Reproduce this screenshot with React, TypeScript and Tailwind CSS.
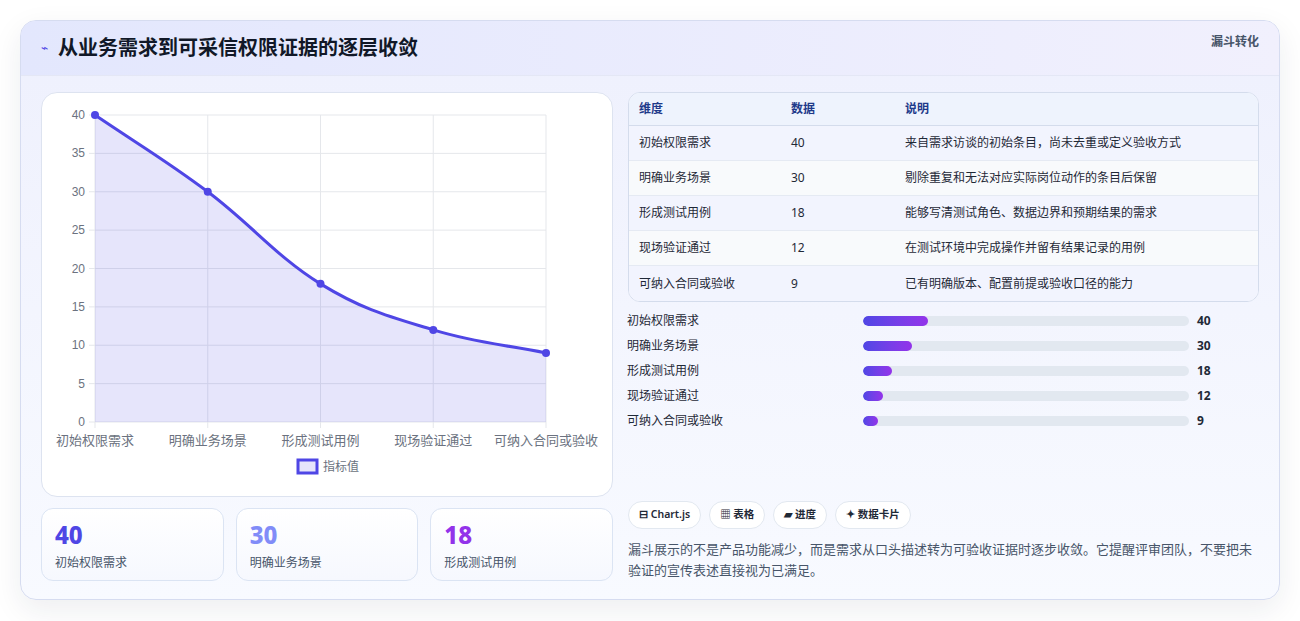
const rows = [
  { name: "初始权限需求", value: 40, note: "来自需求访谈的初始条目，尚未去重或定义验收方式" },
  { name: "明确业务场景", value: 30, note: "剔除重复和无法对应实际岗位动作的条目后保留" },
  { name: "形成测试用例", value: 18, note: "能够写清测试角色、数据边界和预期结果的需求" },
  { name: "现场验证通过", value: 12, note: "在测试环境中完成操作并留有结果记录的用例" },
  { name: "可纳入合同或验收", value: 9, note: "已有明确版本、配置前提或验收口径的能力" },
];

const stats = [
  { value: 40, label: "初始权限需求", color: "text-[#4f46e5]" },
  { value: 30, label: "明确业务场景", color: "text-[#818cf8]" },
  { value: 18, label: "形成测试用例", color: "text-[#9333ea]" },
];

const font = { fontFamily: '"Noto Sans", "Noto Sans CJK SC", sans-serif' };

function Chart() {
  const x0 = 53, x1 = 504, y0 = 22, y1 = 329;
  const xs = rows.map((_, i) => x0 + ((x1 - x0) * i) / 4);
  const ys = rows.map((r) => y1 - ((y1 - y0) * r.value) / 40);
  let d = `M${xs[0]},${ys[0]}`;
  for (let i = 1; i < xs.length; i++) {
    const cx = (xs[i] - xs[i - 1]) / 2.6;
    const prevSlope = i > 1 ? (ys[i] - ys[i - 2]) / (xs[i] - xs[i - 2]) : (ys[1] - ys[0]) / (xs[1] - xs[0]);
    const nextSlope = i < xs.length - 1 ? (ys[i + 1] - ys[i - 1]) / (xs[i + 1] - xs[i - 1]) : (ys[i] - ys[i - 1]) / (xs[i] - xs[i - 1]);
    d += ` C${xs[i - 1] + cx},${ys[i - 1] + prevSlope * cx} ${xs[i] - cx},${ys[i] - nextSlope * cx} ${xs[i]},${ys[i]}`;
  }
  const area = `${d} L${x1},${y1} L${x0},${y1} Z`;
  return (
    <svg width="572" height="403" className="block">
      {[0, 5, 10, 15, 20, 25, 30, 35, 40].map((v) => {
        const y = y1 - ((y1 - y0) * v) / 40;
        return (
          <g key={v}>
            <line x1={x0 - 6} x2={x1} y1={y} y2={y} stroke="#e5e7eb" />
            <text x={x0 - 10} y={y + 4} textAnchor="end" fontSize="12" fill="#6b7280" fontFamily="Liberation Sans, sans-serif">{v}</text>
          </g>
        );
      })}
      {xs.map((x, i) => (
        <g key={i}>
          <line x1={x} x2={x} y1={y0} y2={y1 + 6} stroke="#e5e7eb" />
          <text x={x} y={352} textAnchor="middle" fontSize="13" fill="#6b7280" style={font}>{rows[i].name}</text>
        </g>
      ))}
      <path d={area} fill="rgba(79,70,229,0.14)" />
      <path d={d} fill="none" stroke="#4f46e5" strokeWidth="3" />
      {xs.map((x, i) => (
        <circle key={i} cx={x} cy={ys[i]} r="4" fill="#4f46e5" />
      ))}
      <rect x="256" y="367" width="19" height="13" fill="rgba(79,70,229,0.14)" stroke="#4f46e5" strokeWidth="3" />
      <text x="281" y="378" fontSize="12" fill="#6b7280" style={font}>指标值</text>
    </svg>
  );
}

export default function App() {
  return (
    <div className="min-h-[621px] bg-white pt-5 px-5" style={font}>
      <div className="rounded-2xl border border-[#d6dcf0] bg-gradient-to-b from-[#eef0fd] to-[#f8faff] shadow-[0_10px_30px_rgba(30,41,59,0.08)] overflow-hidden">
        <div className="h-[55px] flex items-center justify-between px-5 bg-gradient-to-r from-[#e3e7fd] to-[#f1f0fd] border-b border-[#e4e7f5]">
          <div className="flex items-center gap-2.5">
            <span className="text-[#4f46e5] text-xs">⌁</span>
            <h1 className="text-xl font-bold text-[#111827]">从业务需求到可采信权限证据的逐层收敛</h1>
          </div>
          <span className="text-xs font-semibold text-[#475569] -mt-3">漏斗转化</span>
        </div>
        <div className="flex gap-[15px] px-5 pt-[16px] pb-[18px]">
          <div className="w-[572px] flex flex-col gap-[11px]">
            <div className="rounded-2xl border border-[#dde3f0] bg-white overflow-hidden">
              <Chart />
            </div>
            <div className="grid grid-cols-3 gap-3">
              {stats.map((s) => (
                <div key={s.label} className="h-[73px] rounded-xl border border-[#dbe4f3] bg-gradient-to-b from-white to-[#f6f8fe] px-[13px] pt-3">
                  <div className={`text-2xl font-extrabold leading-7 ${s.color}`}>{s.value}</div>
                  <div className="text-xs text-[#475569] mt-1.5">{s.label}</div>
                </div>
              ))}
            </div>
          </div>
          <div className="flex-1 flex flex-col">
            <div className="rounded-xl border border-[#d4dcec] bg-white overflow-hidden">
              <div className="flex h-[33px] items-center px-2.5 bg-[#eef3fd] border-b border-[#d4dcec] text-xs font-semibold text-[#1e3a8a]">
                <span className="w-[152px]">维度</span>
                <span className="w-[114px]">数据</span>
                <span>说明</span>
              </div>
              {rows.map((r, i) => (
                <div key={r.name} className={`flex h-[35px] items-center px-2.5 text-xs text-[#1f2937] ${i < 4 ? "border-b border-[#e5eaf3]" : ""} ${i % 2 ? "bg-[#f8fafc]" : "bg-[#f2f4fe]"}`}>
                  <span className="w-[152px]">{r.name}</span>
                  <span className="w-[114px]">{r.value}</span>
                  <span>{r.note}</span>
                </div>
              ))}
            </div>
            <div className="mt-[11px] flex flex-col gap-[9px] -ml-[1px]">
              {rows.map((r) => (
                <div key={r.name} className="flex items-center h-4 text-xs text-[#1f2937]">
                  <span className="w-[236px]">{r.name}</span>
                  <div className="w-[326px] h-[10px] rounded-full bg-[#e2e8f0] overflow-hidden">
                    <div className="h-full rounded-full bg-gradient-to-r from-[#4f46e5] to-[#9333ea]" style={{ width: `${(r.value / 200) * 100}%` }} />
                  </div>
                  <span className="ml-2 font-bold">{r.value}</span>
                </div>
              ))}
            </div>
            <div className="mt-auto flex gap-2 text-[10.5px] font-semibold text-[#1f2937]">
              {["⊟ Chart.js", "▦ 表格", "▰ 进度", "✦ 数据卡片"].map((c) => (
                <span key={c} className="h-7 px-2.5 flex items-center rounded-full border border-[#e2e8f0] bg-white">{c}</span>
              ))}
            </div>
            <p className="mt-2.5 text-[13px] leading-[21px] text-[#475569]">
              漏斗展示的不是产品功能减少，而是需求从口头描述转为可验收证据时逐步收敛。它提醒评审团队，不要把未验证的宣传表述直接视为已满足。
            </p>
          </div>
        </div>
      </div>
    </div>
  );
}
